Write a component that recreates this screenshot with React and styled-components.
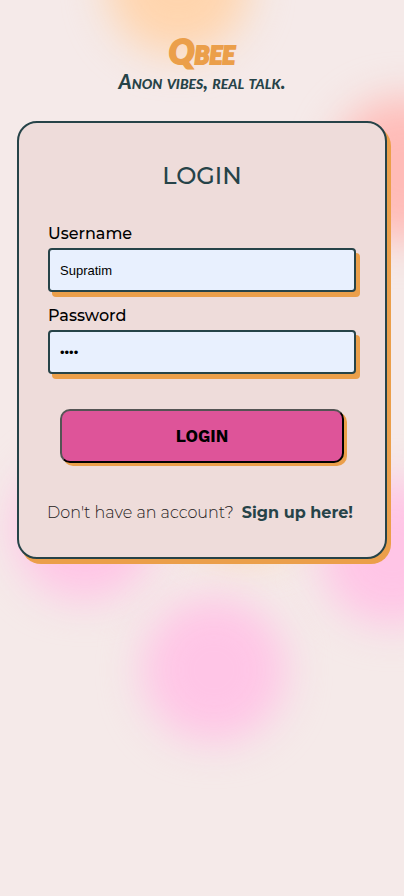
import React from "react";
import styled, { createGlobalStyle } from "styled-components";

const ink = "#264348";
const amber = "#eb9f4a";

const GlobalStyle = createGlobalStyle`
  *, *::before, *::after { box-sizing: border-box; }
  body {
    margin: 0;
    background: #f5eae9;
    color: #000;
    font-family: Montserrat, Inter, sans-serif;
    font-size: 16px;
  }
`;

const Page = styled.main`
  position: relative;
  isolation: isolate;
  min-height: 100vh;
  overflow: hidden;
  padding: 34px 17px 0;
`;

const Backdrop = styled.div`
  position: absolute;
  inset: 0;
  z-index: -1;
`;

const Blob = styled.span`
  position: absolute;
  left: ${(p) => p.$x};
  top: ${(p) => p.$y}px;
  width: 144px;
  height: 144px;
  margin: -72px 0 0 -72px;
  border-radius: 50%;
  background: ${(p) => p.$color};
  filter: blur(20px);
`;

const Header = styled.header`
  text-align: center;
  font-family: "Permanent Marker", Lato, sans-serif;
  font-style: italic;
  font-weight: 900;
  font-variant-caps: small-caps;
`;

const Brand = styled.h1`
  margin: 0;
  color: ${amber};
  font-size: 34px;
  line-height: 34px;
  font-weight: 900;
  -webkit-text-stroke: 2px ${amber};
`;

const Tagline = styled.p`
  margin: 0;
  color: ${ink};
  font-size: 20px;
  line-height: 26px;
`;

const Card = styled.section`
  max-width: 420px;
  margin: 27px auto 0;
  padding: 36px 29px 32px;
  border: 2px solid ${ink};
  border-radius: 20px;
  background: #eedcda;
  box-shadow: 4px 5px 0 ${amber};
`;

const Title = styled.h2`
  margin: 0 0 30px;
  color: ${ink};
  text-align: center;
  font-size: 24px;
  line-height: 34px;
  font-weight: 500;
`;

const Field = styled.div`
  display: flex;
  flex-direction: column;
  gap: 4px;
  margin-bottom: 13px;
`;

const Label = styled.label`
  font-size: 16px;
  line-height: 21px;
  font-weight: 500;
`;

const Input = styled.input`
  width: 100%;
  height: 44px;
  padding: 0 10px;
  border: 2px solid ${ink};
  border-radius: 4px;
  outline: 0;
  background: #e8f0fe;
  color: #000;
  font-family: "Liberation Sans", Arial, sans-serif;
  font-size: 13px;
  box-shadow: 4px 5px 0 ${amber};
`;

const Submit = styled.button`
  display: block;
  width: calc(100% - 24px);
  height: 54px;
  margin: 35px auto 38px;
  border: 2px outset #000;
  border-radius: 10px;
  background: #de5499;
  color: #000;
  font-family: "Work Sans", Inter, sans-serif;
  font-size: 17px;
  font-weight: 700;
  box-shadow: 3px 3px 0 ${amber};
  cursor: pointer;
`;

const SignupRow = styled.p`
  display: flex;
  flex-wrap: wrap;
  justify-content: center;
  column-gap: 4px;
  margin: 0 -4px;
  line-height: 24px;
  font-weight: 300;
  color: #252020;
`;

const SignupLink = styled.a`
  padding: 0 4px;
  color: ${ink};
  font-weight: 700;
  text-decoration: none;
`;

const blobs = [
  { x: "44%", y: -17, color: "#ffd5ae" },
  { x: "100%", y: 170, color: "#ffbbb7" },
  { x: "61%", y: 483, color: "#ffd5ae" },
  { x: "21%", y: 528, color: "#ffc5e6" },
  { x: "97%", y: 553, color: "#ffc5e6" },
  { x: "53%", y: 670, color: "#ffc5e6" },
];

export default function App() {
  return (
    <>
      <GlobalStyle />
      <Page>
        <Backdrop aria-hidden="true">
          {blobs.map((b) => (
            <Blob key={b.y} $x={b.x} $y={b.y} $color={b.color} />
          ))}
        </Backdrop>
        <Header>
          <Brand>Qbee</Brand>
          <Tagline>Anon vibes, real talk.</Tagline>
        </Header>
        <Card>
          <Title>LOGIN</Title>
          <form onSubmit={(e) => e.preventDefault()}>
            <Field>
              <Label htmlFor="username">Username</Label>
              <Input id="username" type="text" defaultValue="Supratim" />
            </Field>
            <Field>
              <Label htmlFor="password">Password</Label>
              <Input id="password" type="password" defaultValue="abcd" />
            </Field>
            <Submit type="submit">LOGIN</Submit>
          </form>
          <SignupRow>
            <span>Don't have an account?</span>
            <SignupLink href="#signup">Sign up here!</SignupLink>
          </SignupRow>
        </Card>
      </Page>
    </>
  );
}
